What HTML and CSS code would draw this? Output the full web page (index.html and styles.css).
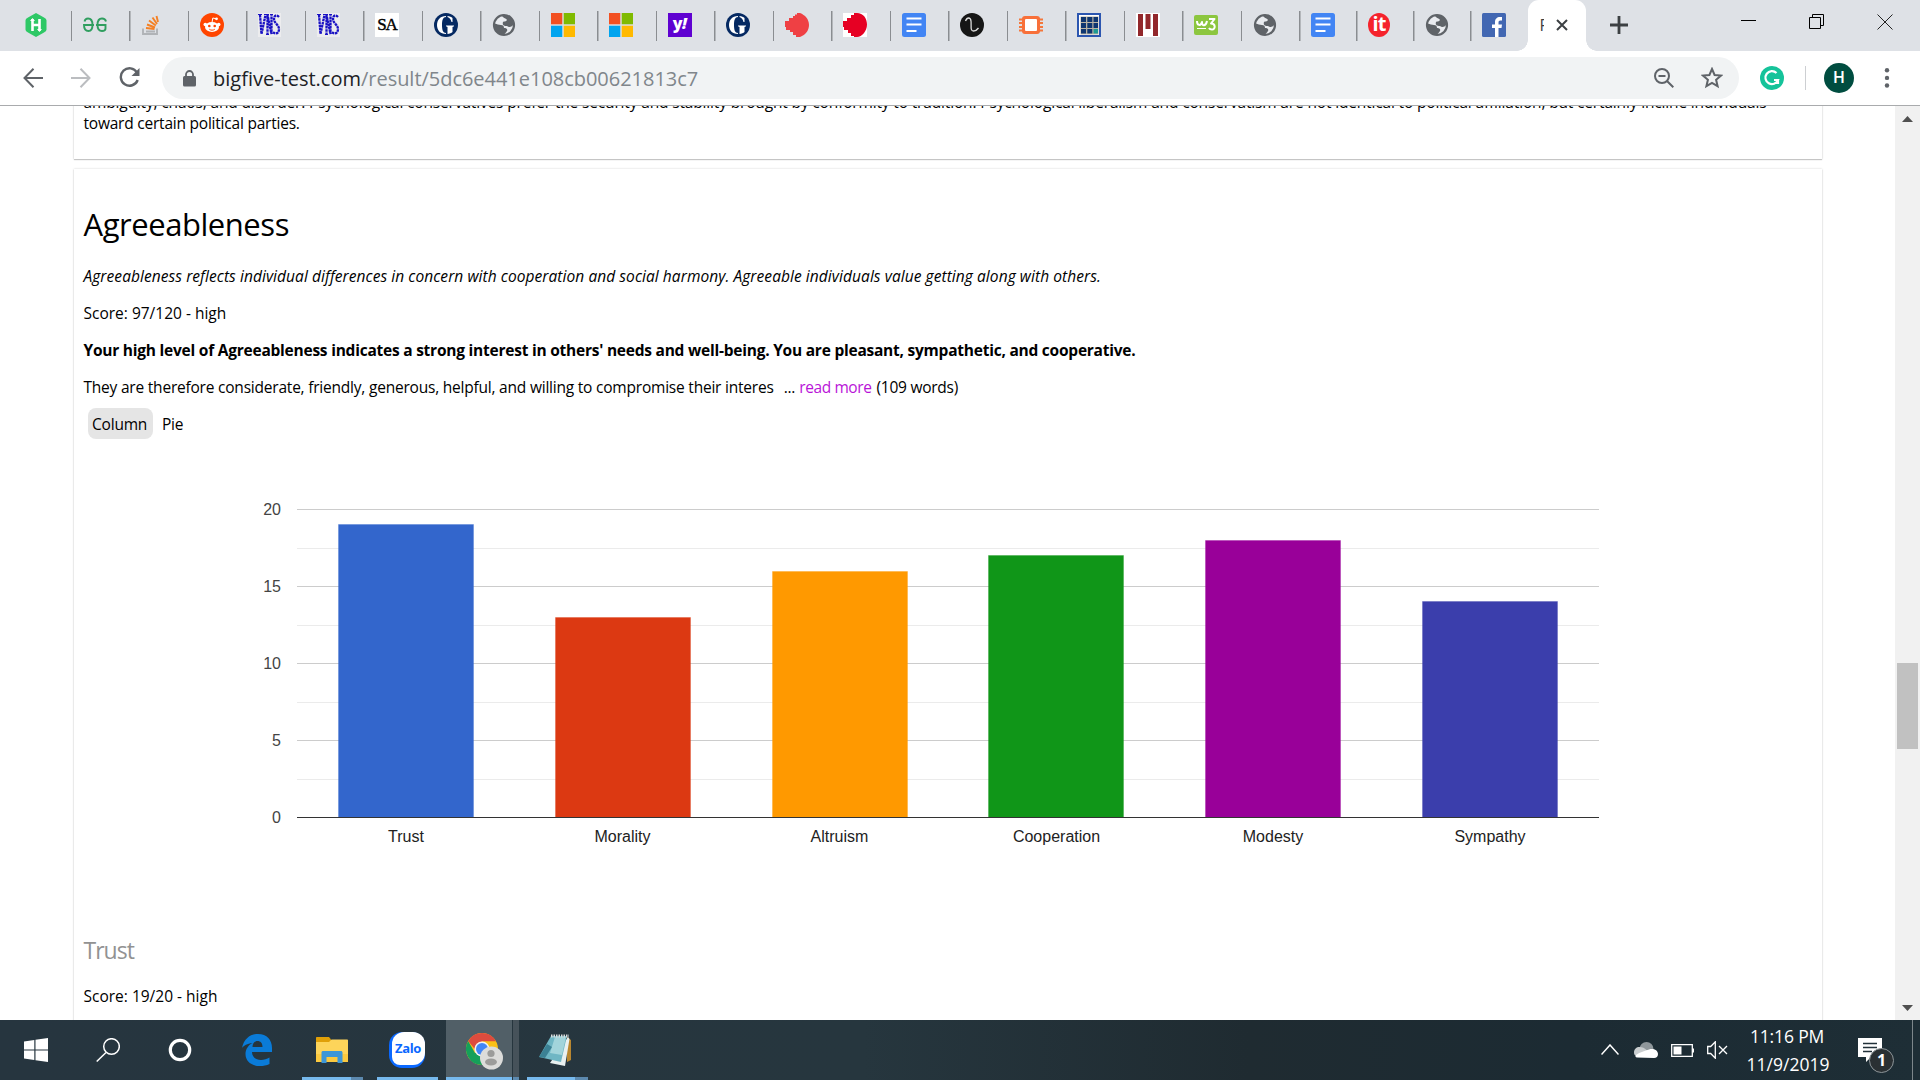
FILE: index.html
```html
<!DOCTYPE html>
<html lang="en">
<head>
<meta charset="utf-8">
<title>Big Five result</title>
<link rel="stylesheet" href="styles.css">
</head>
<body>
<svg class="defs" width="0" height="0">
  <symbol id="globe" viewBox="0 0 24 24"><circle cx="12" cy="12" r="10" fill="#fff" fill-opacity=".35" stroke="#5f6368" stroke-width="2.2"/><path fill="#5f6368" d="M2 11c2-1 4 1 7 1 2 0 3 1 3 3 2 0 4 1 3 3-1 2-3 3-3 4C6 22 1 17 2 11zM10 2c5-1 12 3 12 9-2 3-5 4-7 2-3 0-5-1-4-4 1-1 3 0 4-2-1-2-5-2-5-5z"/></symbol>
  <symbol id="vns" viewBox="0 0 24 24"><path fill="#ececee" d="M0 0h23v24H0z"/><g fill="none" stroke="#1a12c4" stroke-width="2.300" stroke-dasharray="2.6 .6"><path d="M2 2l1.500 19L7.500 2M9.500 22V2l4 19V2M21 4c-3-3-5-1-5 2 0 4 5 6 5 10s-3 6-6 3"/></g><path stroke="#1a12c4" stroke-width="1.200" d="M0 1.500h4M6 1.500h5M12 1.500h3M8 21.500h3"/></symbol>
  <symbol id="guardian" viewBox="0 0 24 24"><circle cx="12" cy="12" r="12" fill="#052962"/><path fill="#fff" d="M12 3C6 3 3 7 3 12s3 9 9 9V20c-3 0-4-3-4-8s1-8 4-8zM13.500 3c2 .2 4 1 5 2v4h-1c-.5-2.500-2-4.500-4-5zM12 12.500h8v.8l-1.500.7v5c-1 1-3 1.800-5 2v-7l-1.500-.7z"/></symbol>
  <symbol id="windows" viewBox="0 0 24 24"><path fill="#f25022" d="M0 0h11.300v11.300H0z"/><path fill="#7fba00" d="M12.700 0H24v11.300H12.700z"/><path fill="#00a4ef" d="M0 12.700h11.300V24H0z"/><path fill="#ffb900" d="M12.700 12.700H24V24H12.700z"/></symbol>
  <symbol id="docs" viewBox="0 0 24 24"><rect width="24" height="24" rx="2.500" fill="#4285f4"/><path stroke="#fff" stroke-width="2.200" d="M4.500 5.500h15M4.500 11.500h15M4.500 18h10"/></symbol>
</svg>

<header class="tabs">
  <div class="tab"><svg viewBox="0 0 24 24"><path fill="#2ec866" d="M12 0l8 4.500c1.500.8 2.500 1.800 2.500 3v9c0 1.200-1 2.200-2.500 3L12 24l-8-4.500c-1.500-.8-2.500-1.800-2.500-3v-9c0-1.200 1-2.200 2.500-3z"/><path fill="none" stroke="#fff" stroke-width="2.600" d="M8.500 6v12M15.500 6v12M8.500 12h7"/><path fill="#fff" d="M6 8l2.500-3L11 8zM13 16h5l-2.500 3z"/></svg></div>
  <div class="tab"><svg viewBox="0 0 24 24" fill="none" stroke="#2f9e5f" stroke-width="1.900"><path d="M1.500 8.500c.5-2 2-3 3.500-3 3 0 4.500 2.500 4.500 6.500S8 18 5.500 18 1 16 1 12h10M23 8.500c-.5-2-2-3-4-3-3 0-4.500 2.500-4.500 6.500s1.500 6 4.500 6c2 0 3.500-1 3.500-2.500V12H13"/></svg></div>
  <div class="tab"><svg viewBox="0 0 24 24" fill="none" stroke-width="1.900"><path stroke="#b0b3b7" d="M2 15.500v5.500h14v-5.500M5 18.500h9"/><path stroke="#f48024" d="M5 15l8.500 1M6 11.500l8 3M8 7.500l6.800 5M11.500 4.500l4.500 6.500M15.500 3l1.500 6"/></svg></div>
  <div class="tab"><svg viewBox="0 0 24 24"><circle cx="12" cy="12" r="12" fill="#ff4500"/><g fill="#fff"><ellipse cx="12" cy="14" rx="7" ry="5"/><circle cx="5.300" cy="11.500" r="1.800"/><circle cx="18.700" cy="11.500" r="1.800"/><circle cx="16.500" cy="5.800" r="1.400"/></g><path d="M12 9.500l.8-4.500 3.500.8" fill="none" stroke="#fff"/><path d="M9.300 16.200c1.500 1.300 4 1.300 5.500 0" fill="none" stroke="#ff4500"/><circle cx="9.300" cy="13" r="1.300" fill="#ff4500"/><circle cx="14.700" cy="13" r="1.300" fill="#ff4500"/></svg></div>
  <div class="tab"><svg><use href="#vns"/></svg></div>
  <div class="tab"><svg><use href="#vns"/></svg></div>
  <div class="tab"><span class="sa">SA</span></div>
  <div class="tab"><svg><use href="#guardian"/></svg></div>
  <div class="tab"><svg><use href="#globe"/></svg></div>
  <div class="tab"><svg><use href="#windows"/></svg></div>
  <div class="tab"><svg><use href="#windows"/></svg></div>
  <div class="tab"><span class="yahoo">y<i>!</i></span></div>
  <div class="tab"><svg><use href="#guardian"/></svg></div>
  <div class="tab"><svg viewBox="0 0 24 24"><path fill="#ef4044" d="M8 3l2 0V1.500h2V0h3c5 2 9 6 9 12 0 5-3 9-7 11l-2 1h-4v-2H8v-3H5v-2H1v-3H0V8h4V5h4z"/></svg></div>
  <div class="tab"><svg viewBox="0 0 24 24"><path fill="#fff" d="M0 0h24v24H0z"/><path fill="#e60023" d="M8 2h3V0h3c6 0 10 5 10 11.500S19 24 14 24h-3v-1H8v-3H5v-3H1v-3H0V8h4V5h4z"/></svg></div>
  <div class="tab"><svg><use href="#docs"/></svg></div>
  <div class="tab"><svg viewBox="0 0 24 24"><circle cx="12" cy="12" r="12" fill="#161616"/><path d="M5.500 8c1.500-4 5-4 5.500 0 .5 5-1 10 2.500 10 2 0 3.500-1 5-3" fill="none" stroke="#ddd" stroke-width="1.300"/></svg></div>
  <div class="tab"><svg viewBox="0 0 24 24"><path stroke="#f4773b" stroke-width="1.800" d="M0 6.500h24M0 10h24M0 14h24M0 17.500h24"/><rect x="3" y="3" width="18" height="18" rx="3" fill="#f8703a"/><rect x="6" y="6" width="12" height="12" rx="1" fill="#fff"/></svg></div>
  <div class="tab"><svg viewBox="0 0 24 24"><path fill="#2c56b0" d="M0 0h24v24H0z"/><path fill="#fff" d="M2 2h20v20H2z"/><path fill="#b9b3a4" d="M3.500 3.500h18v18h-18z"/><path fill="#0f3670" d="M4 4h5v5H4zM10.300 4h5v5h-5zM16.500 4h4.500v5h-4.500zM4 10h5v5H4zM10.300 10h5v5h-5zM16.500 10h4.500v5h-4.500zM4 16h5v4.500H4zM10.300 16h5v4.500h-5z"/><path fill="#1e9a94" d="M16.500 16h4.500v4.500h-4.500z"/></svg></div>
  <div class="tab"><svg viewBox="0 0 24 24"><path fill="#fff" d="M0 0h24v24H0z"/><path fill="#92272b" d="M2 1h5v22H2zM9.500 1h5v15h-5zM17 1h5v22h-5z"/></svg></div>
  <div class="tab"><svg viewBox="0 0 24 24"><rect y="2" width="24" height="20" rx="2" fill="#8cc63f"/><path fill="none" stroke="#fff" stroke-width="2" stroke-linejoin="round" d="M3 8c0 5 4 5 5 1 0 5 4 4 5-1M15 6h5.500l-3.500 4.500c5 0 4.500 6 1 6-1.500 0-2.500-.5-3-1.500"/><path stroke="#fff" d="M3 15.500h9"/></svg></div>
  <div class="tab"><svg><use href="#globe"/></svg></div>
  <div class="tab narrow"><svg><use href="#docs"/></svg></div>
  <div class="tab narrow"><span class="it">it</span></div>
  <div class="tab narrow"><svg><use href="#globe"/></svg></div>
  <div class="tab narrow last"><svg viewBox="0 0 24 24"><rect width="24" height="24" rx="1.500" fill="#4267b2"/><path fill="#fff" d="M13 24v-9h-3v-3.500h3V9c0-3 2-5 5-5h2v3.500h-1.500c-1.500 0-2 .7-2 2v2H20l-.5 3.500h-3v9z"/></svg></div>
  <div class="tab-active"><span class="tab-title">F</span><svg class="tab-close" viewBox="0 0 12 12"><path d="M1 1l10 10M11 1L1 11" stroke="#3c4043" stroke-width="2"/></svg></div>
  <svg class="new-tab" viewBox="0 0 18 18"><path d="M9 0v18M0 9h18" stroke="#3c4043" stroke-width="2.800"/></svg>
  <div class="window-controls">
    <svg viewBox="0 0 16 16"><path d="M0 6.500h15" stroke="#000"/></svg>
    <svg viewBox="0 0 16 16" fill="none" stroke="#000"><path d="M.5 3.500h11v11H.5zM3.500 3.500v-3h11v11h-3"/></svg>
    <svg viewBox="0 0 16 16"><path d="M.5.5l15 15M15.500.5l-15 15" stroke="#222"/></svg>
  </div>
</header>

<nav class="toolbar">
  <svg class="nav-icon" viewBox="0 0 20 20" fill="none" stroke="#5f6368" stroke-width="2"><path d="M20 10H1.500M10.500 .7L1.500 10l9 9.300"/></svg>
  <svg class="nav-icon" viewBox="0 0 20 20" fill="none" stroke="#bbbdc0" stroke-width="2"><path d="M0 10h18.500M9.500 .7l9 9.300-9 9.300"/></svg>
  <svg class="nav-icon reload" viewBox="0 0 21 21"><path d="M18 5.500A8.700 8.700 0 1 0 18.700 13" fill="none" stroke="#5f6368" stroke-width="2.400"/><path d="M20.500 1v8h-8z" fill="#5f6368"/></svg>
  <div class="omnibox">
    <svg class="lock" viewBox="0 0 13 17"><rect y="6" width="13" height="10.500" rx="1.500" fill="#5f6368"/><path d="M3 7V4.500a3.500 3.500 0 0 1 7 0V7" fill="none" stroke="#5f6368" stroke-width="1.800"/></svg>
    <span class="url"><span class="host">bigfive-test.com</span><span class="path">/result/5dc6e441e108cb00621813c7</span></span>
    <svg class="zoom" viewBox="0 0 20 20" fill="none" stroke="#5f6368"><circle cx="8" cy="8" r="7" stroke-width="2"/><path d="M4.500 8h7M13 13l6.300 6.300" stroke-width="2"/></svg>
    <svg class="star" viewBox="0 0 22 22"><path d="M11 2l2.600 6 6.400.6-4.900 4.200 1.500 6.400-5.600-3.400-5.600 3.400 1.500-6.400L2 8.600 8.400 8z" fill="none" stroke="#5f6368" stroke-width="2"/></svg>
  </div>
  <svg class="grammarly" viewBox="0 0 24 24"><circle cx="12" cy="12" r="12" fill="#15c39a"/><path d="M16.500 7A6.500 6.500 0 1 0 18 14h-4M18 18v-4.500" fill="none" stroke="#fff" stroke-width="2.200"/></svg>
  <span class="divider"></span>
  <span class="avatar">H</span>
  <svg class="menu-dots" viewBox="0 0 6 20" fill="#5f6368"><circle cx="3" cy="2.300" r="2.200"/><circle cx="3" cy="9.900" r="2.200"/><circle cx="3" cy="17.500" r="2.200"/></svg>
</nav>

<div class="viewport">
  <main class="page">
    <section class="card previous">
      <p class="long">ambiguity, chaos, and disorder. Psychological conservatives prefer the security and stability brought by conformity to tradition. Psychological liberalism and conservatism are not identical to political affiliation, but certainly incline individuals<br><span class="tail">toward certain political parties.</span></p>
    </section>
    <section class="card domain">
      <h1>Agreeableness</h1>
      <p class="intro">Agreeableness reflects individual differences in concern with cooperation and social harmony. Agreeable individuals value getting along with others.</p>
      <p>Score: 97/120 - high</p>
      <p class="summary">Your high level of Agreeableness indicates a strong interest in others' needs and well-being. You are pleasant, sympathetic, and cooperative.</p>
      <p class="excerpt">They are therefore considerate, friendly, generous, helpful, and willing to compromise their interes<span class="dots">...</span><a class="more">read more</a><span class="count">(109 words)</span></p>
      <div class="switch"><span class="option selected">Column</span><span class="option">Pie</span></div>
      <svg class="chart" width="1400" height="495" viewBox="240 439 1400 495">
        <g fill="#ebebeb" shape-rendering="crispEdges"><path d="M297 548h1302v1H297zM297 625h1302v1H297zM297 702h1302v1H297zM297 779h1302v1H297z"/></g>
        <g fill="#ccc" shape-rendering="crispEdges"><path d="M297 509h1302v1H297zM297 586h1302v1H297zM297 663h1302v1H297zM297 740h1302v1H297z"/></g>
        <g stroke-opacity=".3">
          <rect x="338.500" y="524.500" width="135" height="293" fill="#3366cc" stroke="#3366cc"/>
          <rect x="555.500" y="617.500" width="135" height="200" fill="#dc3912" stroke="#dc3912"/>
          <rect x="772.500" y="571.500" width="135" height="246" fill="#ff9900" stroke="#ff9900"/>
          <rect x="988.500" y="555.500" width="135" height="262" fill="#109618" stroke="#109618"/>
          <rect x="1205.500" y="540.500" width="135" height="277" fill="#990099" stroke="#990099"/>
          <rect x="1422.500" y="601.500" width="135" height="216" fill="#3b3eac" stroke="#3b3eac"/>
        </g>
        <path d="M297 817h1302v1H297z" fill="#333"/>
        <g class="axis y-axis"><text x="281" y="515">20</text><text x="281" y="592">15</text><text x="281" y="669">10</text><text x="281" y="746">5</text><text x="281" y="823">0</text></g>
        <g class="axis x-axis"><text x="406" y="842">Trust</text><text x="622.500" y="842">Morality</text><text x="839.500" y="842">Altruism</text><text x="1056.500" y="842">Cooperation</text><text x="1273" y="842">Modesty</text><text x="1490" y="842">Sympathy</text></g>
      </svg>
      <h2>Trust</h2>
      <p class="facet-score">Score: 19/20 - high</p>
    </section>
  </main>
  <aside class="scrollbar">
    <svg viewBox="0 0 11 6"><path d="M0 6h11L5.500 0z" fill="#505050"/></svg>
    <span class="thumb"></span>
    <svg class="down" viewBox="0 0 11 6"><path d="M0 0h11L5.500 6z" fill="#505050"/></svg>
  </aside>
</div>

<footer class="taskbar">
  <div class="launch">
    <svg width="24" height="24" viewBox="0 0 24 24" fill="#fff"><path d="M0 3.500L10.300 2v9.500H0zM11.500 1.800L24 0v11.500H11.500zM0 12.500h10.300V22L0 20.500zM11.500 12.500H24V24l-12.500-1.800z"/></svg>
    <svg width="24" height="24" viewBox="0 0 24 24" fill="none" stroke="#fff" stroke-width="1.500"><circle cx="15.500" cy="8.500" r="7.800"/><path d="M10 14.500L.7 23.500"/></svg>
    <svg width="24" height="24" viewBox="0 0 24 24"><circle cx="12" cy="12" r="9.700" fill="none" stroke="#fff" stroke-width="3.200"/></svg>
  </div>
  <div class="app edge"><svg width="30" height="32" viewBox="0 0 30 32"><path fill="#0a7bd8" d="M0 14C2 5 8 0 16 0c9 0 14 6 14 14v4H10c0 5 4 8 9 8 3 0 6-1 8.500-2.500V30c-3 1.500-6 2-9.500 2C9 32 3.500 27 3.500 20c0-5 3-9 7-11C5 9.500 2 11.500 0 14zM10.500 13h10c0-4-2-6-5-6s-5 2.500-5 6z"/></svg></div>
  <div class="app folder"><svg width="32" height="27" viewBox="0 0 32 27"><path fill="#e0a008" d="M0 1c0-.6.400-1 1-1h12l2 2.500V6H0z"/><path fill="#fdd45a" d="M0 5h13l2.500-2.500H31c.6 0 1 .4 1 1V25H0z"/><path fill="#fbc93f" d="M0 17h32v8H0z"/><path fill="#3c96d8" d="M5.500 26V15.500c0-1 .8-1.500 1.500-1.500h18c.8 0 1.500.7 1.500 1.500V26h-5v-6h-11v6z"/></svg></div>
  <div class="app zalo-app"><span class="zalo"><span>Zalo</span></span></div>
  <div class="app chrome"><svg width="40" height="38" viewBox="0 0 40 38">
    <circle cx="18" cy="17" r="16" fill="#fbc116"/><path fill="#15a05a" d="M4.140 9A16 16 0 0 0 18 33l7-12H11z"/><path fill="#dd4b3e" d="M4.140 9A16 16 0 0 1 31.900 9.300H18l-7 8z"/><circle cx="18" cy="17" r="7.600" fill="#f2f2f2"/><circle cx="18" cy="17" r="6" fill="#4286f5"/><circle cx="27.500" cy="26" r="11.500" fill="#dcdcda"/><circle cx="27" cy="21.500" r="3.600" fill="#9c9c9a"/><ellipse cx="27" cy="30" rx="6" ry="3.500" fill="#9c9c9a"/></svg></div>
  <div class="app stack"></div>
  <div class="app notepad"><svg width="34" height="33" viewBox="0 0 34 33"><path fill="#b98730" d="M28 3l4 3v20l-4 2z"/><path fill="#e9f0f0" d="M29 3l1.500 2-4.500 27-15-3z"/><path fill="#6fb6c4" d="M12 2h16l-6 26L0 23z"/><path fill="#b8e1e6" d="M16 3h11l-4 18-12-2z" opacity=".7"/><path fill="#2e7488" d="M8 10l5 3-7 11-6-1z" opacity=".8"/><path stroke="#d8dcdc" stroke-width="3" stroke-dasharray="1.500 1" d="M12 2h18"/></svg></div>
  <div class="tray">
    <svg class="chevron" width="18" height="11" viewBox="0 0 18 11"><path d="M.5 10.500L9 1l8.500 9.500" fill="none" stroke="#fff" stroke-width="1.500"/></svg>
    <svg class="cloud" width="24" height="16" viewBox="0 0 24 16"><circle cx="12.500" cy="7" r="7" fill="#8f979b"/><path fill="#c9cdcf" d="M0 10.500C0 7 2.500 5 5.500 5c3 0 5 1 7 3l7 6H3c-2 0-3-1.500-3-3.500z"/><path fill="#fff" d="M3 15.500c-1.500 0-2-1.500-1-2.500C6 10 11 9 15 7.500c4-1.500 9 .5 9 4.500 0 2.500-1.500 4-4 4z"/></svg>
    <svg class="battery" width="23" height="13" viewBox="0 0 23 13"><path d="M.7.700h20.600v11.600H.7z" fill="none" stroke="#fff" stroke-width="1.300"/><path d="M2.500 2.500h8v8h-8zM21 4.500h2v4h-2z" fill="#fff"/></svg>
    <svg class="speaker" width="21" height="18" viewBox="0 0 21 18" fill="none" stroke="#fff" stroke-width="1.300"><path d="M.7 5.500h3l4.600-4.700v16.400L3.700 12.500h-3zM12 5l8 8M20 5l-8 8"/></svg>
    <div class="clock"><span class="time">11:16 PM</span><span>11/9/2019</span></div>
    <div class="notice"><svg width="24" height="26" viewBox="0 0 24 26"><path fill="#fff" d="M0 0h24v19H13l-5 5v-5H0z"/><path d="M5 5.500h14M5 9.500h14M5 13.500h9" stroke="#22313a" stroke-width="1.400"/></svg><span class="badge">1</span></div>
  </div>
</footer>
</body>
</html>
```
FILE: styles.css
```css
* { box-sizing: border-box; }
body {
  margin: 0; width: 1920px; height: 1080px; overflow: hidden;
  display: flex; flex-direction: column; background: #fff; color: #000;
  font-family: "Open Sans", "Noto Sans", sans-serif;
}
svg { display: block; flex: none; }
.defs { position: absolute; }

/* tab strip */
.tabs { height: 51px; flex: none; background: #dee1e6; display: flex; padding-left: 13.500px; }
.tab {
  width: 58.5px; flex: none; display: flex; align-items: center; padding-left: 10.500px;
  background: linear-gradient(#8a8d91, #8a8d91) right 11px / 1.500px 30px no-repeat;
}
.tab.narrow { width: 57px; }
.tab.last { width: 56px; background: none; }
.tab svg { width: 24px; height: 24px; }
.tab > * { margin-top: -1px; }
.sa, .yahoo, .it { width: 24px; height: 24px; text-align: center; line-height: 23px; }
.sa { background: #fff; font: 17px/23px "Liberation Serif", serif; letter-spacing: -1px; -webkit-text-stroke: .4px #000; }
.yahoo { background: #5f01d1; color: #fff; font-size: 16px; font-weight: 800; line-height: 21px; letter-spacing: -.5px; }
.it { width: 22px; background: #f5232c; color: #fff; border-radius: 50%; font-size: 20px; font-weight: 700; line-height: 21px; letter-spacing: -1px; }
.tab-active {
  position: relative; width: 58px; flex: none; background: #fff; border-radius: 11px 11px 0 0;
  display: flex; align-items: center; padding-left: 12px;
}
.tab-active::before, .tab-active::after { content: ""; position: absolute; bottom: 0; width: 11px; height: 11px; }
.tab-active::before { left: -11px; background: radial-gradient(circle at 0 0, transparent 10.500px, #fff 11px); }
.tab-active::after { right: -11px; background: radial-gradient(circle at 100% 0, transparent 10.500px, #fff 11px); }
.tab-title { width: 4px; overflow: hidden; font-size: 16px; line-height: 20px; margin-top: -2px; color: #3c4043; }
.tab-close { width: 12px; height: 12px; margin-left: 12px; margin-top: -1px; }
.new-tab { width: 18px; height: 18px; margin: 16px 0 0 24px; }
.window-controls { margin: 14px 27px 0 auto; display: flex; gap: 52px; }
.window-controls svg { width: 16px; height: 16px; }

/* address bar */
.toolbar { height: 55px; flex: none; border-bottom: 1px solid #a9abad; display: flex; align-items: center; padding-left: 23px; }
.nav-icon { width: 20px; height: 20px; margin-right: 28px; margin-top: -1px; }
.nav-icon.reload { width: 21px; height: 21px; margin-right: 22px; }
.omnibox { width: 1577px; height: 42px; border-radius: 21px; background: #f1f3f4; display: flex; align-items: center; padding-left: 21px; }
.lock { width: 13px; height: 17px; margin-right: 17px; }
.url { font-size: 20px; line-height: 30px; color: #80868b; margin-top: 2px; flex: 1; }
.host { color: #202124; }
.path { letter-spacing: -.03px; }
.zoom { width: 20px; height: 20px; margin-right: 27px; }
.star { width: 22px; height: 22px; margin-right: 16px; }
.grammarly { width: 24px; height: 24px; margin-left: 21px; }
.divider { width: 1px; height: 24px; background: #cdcfd2; margin: 0 18px 0 21px; }
.avatar { width: 30px; height: 30px; border-radius: 50%; background: #004d40; color: #fff; font: 500 16px/30px Roboto, sans-serif; text-align: center; }
.menu-dots { width: 6px; height: 20px; margin-left: 30px; }

/* page */
.viewport { flex: 1; min-height: 0; display: flex; overflow: hidden; }
.page { flex: 1; padding: 0 73px 0 74px; overflow: hidden; font-size: 15.500px; line-height: 21px; }
.card { padding: 0 9.500px; box-shadow: 0 0 2px rgba(0,0,0,.18), 0 1px 1px rgba(0,0,0,.18); }
.card p { margin: 0 0 16px; white-space: nowrap; }
.previous { margin-top: -14px; padding-bottom: 25px; margin-bottom: 10px; }
.previous .long { margin: 0; letter-spacing: -.157px; }
.tail { letter-spacing: -.22px; }
.domain { padding-top: 33px; height: 900px; }
h1 { margin: 0 0 20px; font-size: 31px; line-height: 44px; font-weight: 400; letter-spacing: -.45px; }
.intro { font-style: italic; letter-spacing: .068px; }
.summary { font-weight: 700; letter-spacing: -.232px; }
.excerpt { letter-spacing: -.213px; }
.dots { margin-left: 10px; }
.more { color: #b914d8; margin-left: 4px; letter-spacing: -.4px; }
.count { margin-left: 5px; letter-spacing: -.25px; }
.switch { display: flex; margin: -6px 0 0 4.500px; gap: 4px; }
.option { padding: 6px 4px 4px; border-radius: 8px; height: 31px; letter-spacing: -.2px; }
.option.selected { background: #e5e5e5; width: 65px; }
.option + .option { padding-left: 5px; }
.chart { margin-left: 156.500px; }
.axis { font: 16px "Liberation Sans", Arial, sans-serif; }
.y-axis { fill: #444; text-anchor: end; }
.x-axis { fill: #222; text-anchor: middle; }
h2 { margin: 0 0 20px; font-size: 23px; line-height: 32px; font-weight: 400; color: #929292; letter-spacing: -1px; }
.scrollbar { width: 25px; background: #f1f1f1; display: flex; flex-direction: column; align-items: center; padding: 10px 0 9px; }
.scrollbar svg { width: 11px; height: 6px; }
.thumb { width: 21px; height: 86px; background: #c1c1c1; margin-top: 541px; }
.down { margin-top: auto; }

/* taskbar */
.taskbar { height: 60px; flex: none; display: flex; color: #fff; background: linear-gradient(90deg, #26353f 0, #26363e 45%, #1f2b31 65%, #1c2b33 82%, #1e2e36 100%); }
.launch { display: flex; align-items: center; gap: 48px; padding-left: 24px; width: 228px; }
.app { display: flex; justify-content: center; align-items: center; border-bottom: 3px solid #76b9ed; flex: none; }
.edge { width: 60px; padding: 0 2px 0 0; border: 0; margin-right: 14px; }
.folder { width: 61px; padding: 3px 2px 0 0; border-image: linear-gradient(90deg, #76b9ed 79%, #5c89ae 79%) 1; border-width: 0 0 3px; }
.zalo-app { width: 61px; margin-left: 14px; padding: 3px 2px 0 0; }
.zalo { width: 36px; height: 36px; border-radius: 13px; background: #0a68ff; padding-left: 3px; }
.zalo span { display: block; height: 33px; border-radius: 12px 12px 12px 8px; background: #fff; color: #0a68ff; font-size: 13px; font-weight: 700; line-height: 33px; text-align: center; letter-spacing: -.4px; }
.chrome { width: 66px; margin-left: 8px; background: #515f67; padding: 4px 0 0 10px; }
.stack { width: 6px; margin-left: 1px; background: #46525a; border-color: #5c89ae; }
.notepad { width: 61px; margin-left: 8px; padding: 3px 4px 0 0; border-image: linear-gradient(90deg, #76b9ed 77%, #5c89ae 77%) 1; border-width: 0 0 3px; }
.tray { margin-left: auto; display: flex; align-items: center; padding-right: 7px; background: linear-gradient(#7d868b, #7d868b) right 7px top / 1px 60px no-repeat; }
.chevron { margin-right: 15px; margin-top: -2px; }
.cloud { margin-right: 13px; }
.battery { margin-right: 13px; }
.speaker { margin-right: 17px; }
.clock { width: 86px; display: flex; flex-direction: column; align-items: center; font-size: 17.500px; line-height: 28px; margin-top: -1px; }
.time { letter-spacing: -.15px; margin-left: -2px; }
.notice { position: relative; margin: 1px 31px 0 27px; }
.badge { position: absolute; left: 11px; top: 10px; width: 25px; height: 25px; border-radius: 50%; border: 1px solid #8d9599; background: #2a3033; font-size: 16px; font-weight: 700; line-height: 23px; text-align: center; }
```
